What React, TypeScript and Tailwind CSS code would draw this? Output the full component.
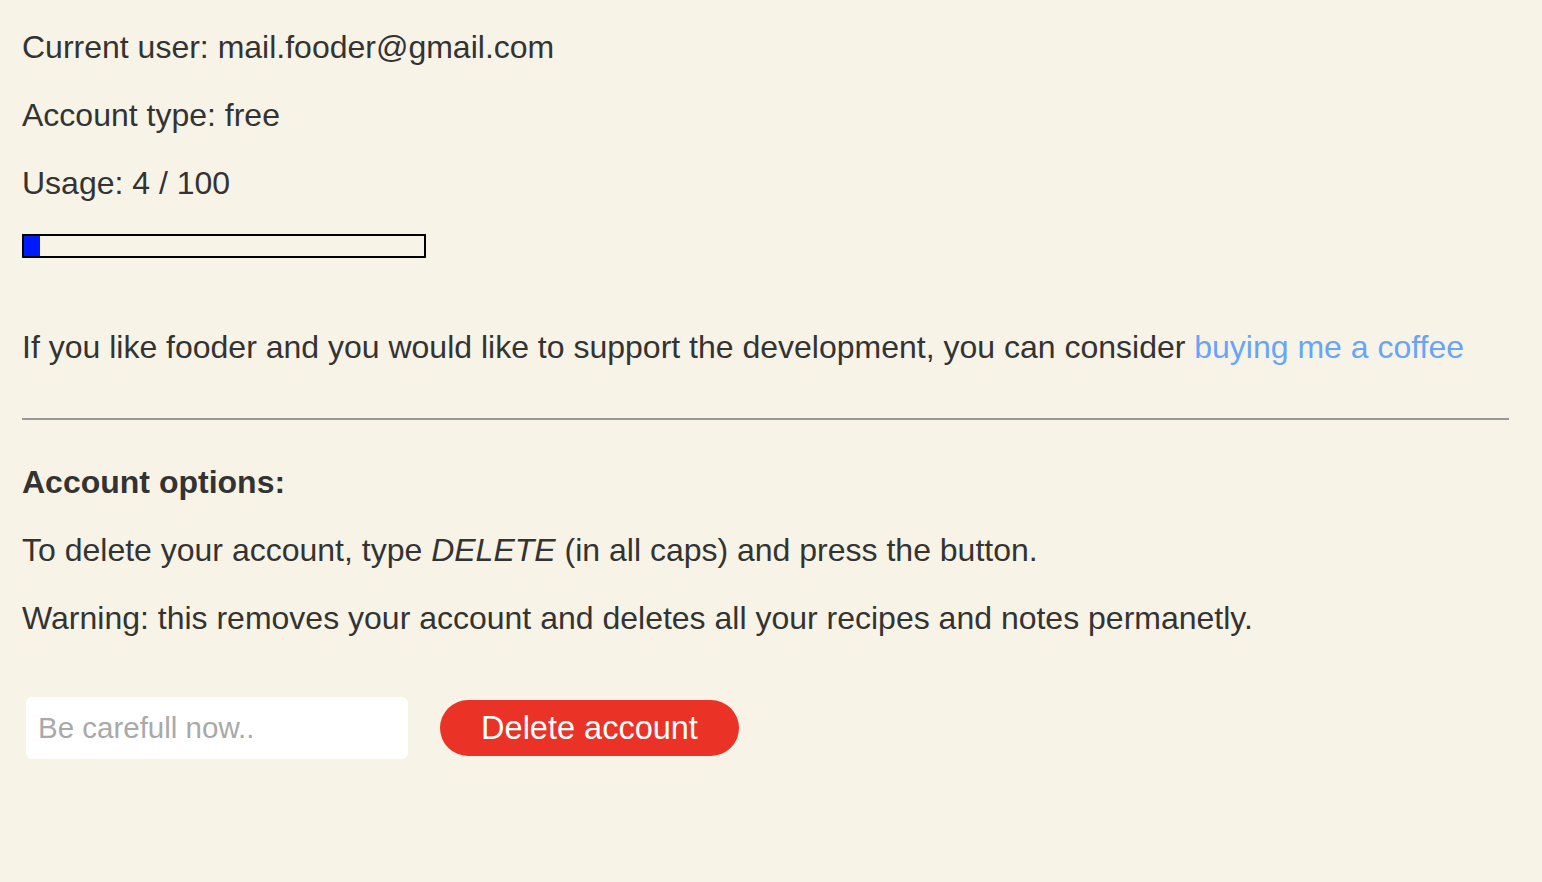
export default function App() {
  return (
    <div
      className="min-h-[882px] w-full bg-[#f7f4e7] text-[#333333] pl-[22px] pr-[33px] pt-[29px]"
      style={{ fontFamily: '"Liberation Sans", Arial, Helvetica, sans-serif' }}
    >
      <p className="text-[32px] leading-[36px]">Current user: mail.fooder@gmail.com</p>
      <p className="mt-[32px] text-[32px] leading-[36px]">Account type: free</p>
      <p className="mt-[32px] text-[32px] leading-[36px]">Usage: 4 / 100</p>
      <div className="mt-[33px] h-[24px] w-[404px] border-2 border-black">
        <div className="h-full w-[16px] bg-[#0019ff]" />
      </div>
      <p className="mt-[71px] text-[32px] leading-[36px]">
        If you like fooder and you would like to support the development, you can consider{" "}
        <a href="#" className="text-[#68a4fa]">buying me a coffee</a>
      </p>
      <hr className="mt-[53px] border-0 border-t-2 border-[#999999]" />
      <p className="mt-[44px] text-[32px] leading-[36px] font-bold">Account options:</p>
      <p className="mt-[32px] text-[32px] leading-[36px]">
        To delete your account, type <em>DELETE</em> (in all caps) and press the button.
      </p>
      <p className="mt-[32px] text-[32px] leading-[36px]">
        Warning: this removes your account and deletes all your recipes and notes permanetly.
      </p>
      <div className="mt-[61px] flex items-center gap-[32px] pl-[4px]">
        <input
          type="text"
          placeholder="Be carefull now.."
          className="h-[62px] w-[382px] rounded-[6px] bg-white px-[12px] text-[29.5px] text-[#333] placeholder:text-[#a9a9a9] outline-none"
        />
        <button className="h-[56px] w-[299px] rounded-full bg-[#ea3326] text-[32.5px] text-white">
          Delete account
        </button>
      </div>
    </div>
  );
}
